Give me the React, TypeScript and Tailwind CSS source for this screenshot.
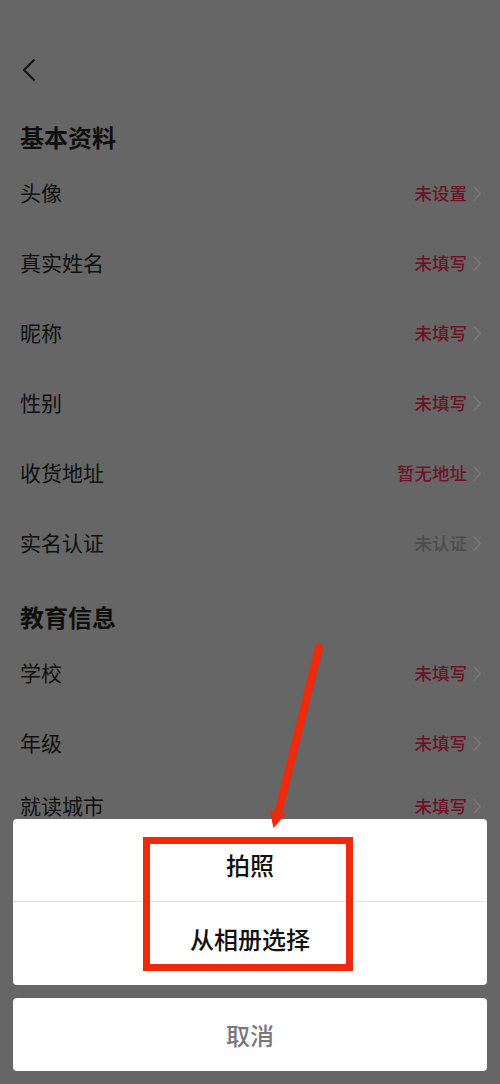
import React from "react";

const font = { fontFamily: '"Noto Sans CJK SC", "Noto Sans", sans-serif' };

type Row = { label: string; value: string; muted?: boolean };

const basic: Row[] = [
  { label: "头像", value: "未设置" },
  { label: "真实姓名", value: "未填写" },
  { label: "昵称", value: "未填写" },
  { label: "性别", value: "未填写" },
  { label: "收货地址", value: "暂无地址" },
  { label: "实名认证", value: "未认证", muted: true },
];

const edu: Row[] = [
  { label: "学校", value: "未填写" },
  { label: "年级", value: "未填写" },
  { label: "就读城市", value: "未填写" },
];

function Chevron() {
  return (
    <svg width="10" height="17" viewBox="0 0 10 17" className="ml-[5px]">
      <path d="M2 1.5 L8.2 8.5 L2 15.5" fill="none" stroke="#7a7a7a" strokeWidth="1.5" />
    </svg>
  );
}

function InfoRow({ row, h }: { row: Row; h: string }) {
  return (
    <div className={`flex items-center justify-between pl-[20px] pr-[18px] ${h}`}>
      <span className="text-[21px] text-[#101010]">{row.label}</span>
      <span className="flex items-center">
        <span
          className={`text-[17.5px] font-medium ${row.muted ? "text-[#4c4c4c]" : "text-[#6e1226]"}`}
        >
          {row.value}
        </span>
        <Chevron />
      </span>
    </div>
  );
}

export default function App() {
  return (
    <div className="relative h-[1084px] w-[500px] overflow-hidden bg-[#666666]" style={font}>
      {/* back */}
      <div className="pl-[22px] pt-[58px]">
        <svg width="14" height="24" viewBox="0 0 14 24">
          <path d="M12.5 1.5 L2 12 L12.5 22.5" fill="none" stroke="#141414" strokeWidth="2" />
        </svg>
      </div>

      <div className="mt-[34px] flex h-[42px] items-center pl-[20px]">
        <h2 className="text-[24px] font-bold text-[#0e0e0e]">基本资料</h2>
      </div>
      {basic.map((r) => (
        <InfoRow key={r.label} row={r} h="h-[70px]" />
      ))}

      <div className="mt-[18px] flex h-[42px] items-center pl-[20px]">
        <h2 className="text-[24px] font-bold text-[#0e0e0e]">教育信息</h2>
      </div>
      <InfoRow row={edu[0]} h="h-[70px]" />
      <InfoRow row={edu[1]} h="h-[70px]" />
      <InfoRow row={edu[2]} h="h-[56px]" />

      {/* action sheet */}
      <div className="absolute bottom-[13px] left-[13px] right-[13px] flex flex-col gap-[13px]">
        <div className="overflow-hidden rounded-[4px] bg-white">
          <div className="flex h-[83px] items-center justify-center border-b border-[#e2e2e2] pt-[10px] text-[24px] font-medium text-[#111]">
            拍照
          </div>
          <div className="flex h-[83px] items-center justify-center pb-[10px] text-[24px] font-medium text-[#111]">
            从相册选择
          </div>
        </div>
        <div className="flex h-[73px] items-center justify-center rounded-[4px] bg-white text-[24px] font-medium text-[#77777d]">
          取消
        </div>
      </div>

      {/* highlight box */}
      <div className="absolute left-[143px] top-[837px] h-[134px] w-[210px] border-[7px] border-[#ee2a0c]" />

      {/* pointer arrow */}
      <svg className="absolute left-0 top-0" width="500" height="1084" viewBox="0 0 500 1084">
        <line x1="319" y1="648" x2="278" y2="814" stroke="#ee2a0c" strokeWidth="8" strokeLinecap="round" />
        <polygon points="273.5,828 286,814 269.5,810" fill="#ee2a0c" />
      </svg>
    </div>
  );
}
